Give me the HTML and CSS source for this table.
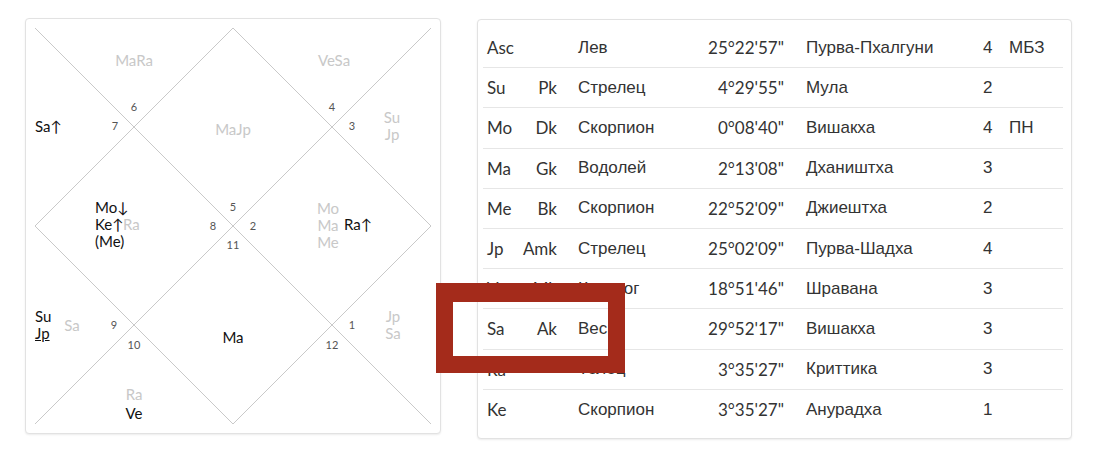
FILE: index.html
```html
<!DOCTYPE html>
<html>
<head>
<meta charset="utf-8">
<link rel="stylesheet" href="styles.css">
</head>
<body>
<div class="page">
  <div class="card chart-card">
    <div class="chart">
      <svg class="lines" width="396" height="396" viewBox="0 0 396 396">
        <g stroke="#c9c9c9" stroke-width="1" fill="none">
          <line x1="0" y1="0" x2="396" y2="396"/>
          <line x1="396" y1="0" x2="0" y2="396"/>
          <polygon points="198,0 396,198 198,396 0,198"/>
        </g>
      </svg>
      <div class="lbl g l-mara">MaRa</div>
      <div class="lbl g l-vesa">VeSa</div>
      <div class="lbl n n6">6</div>
      <div class="lbl n n7">7</div>
      <div class="lbl n n4">4</div>
      <div class="lbl n n3">3</div>
      <div class="lbl b l-sa">Sa↑</div>
      <div class="lbl g l-majp">MaJp</div>
      <div class="lbl g l-sujp">Su<br>Jp</div>
      <div class="lbl n n5">5</div>
      <div class="lbl n n8">8</div>
      <div class="lbl n n2">2</div>
      <div class="lbl n n11">11</div>
      <div class="lbl b l-moke">Mo↓<br>Ke↑<br>(Me)</div>
      <div class="lbl g l-ra1">Ra</div>
      <div class="lbl g l-momame">Mo<br>Ma<br>Me</div>
      <div class="lbl b l-ra2">Ra↑</div>
      <div class="lbl b l-sujp2">Su<br><span class="ul">Jp</span></div>
      <div class="lbl g l-sa2">Sa</div>
      <div class="lbl n n9">9</div>
      <div class="lbl n n10">10</div>
      <div class="lbl n n1">1</div>
      <div class="lbl n n12">12</div>
      <div class="lbl b l-ma">Ma</div>
      <div class="lbl g l-jpsa">Jp<br>Sa</div>
      <div class="lbl g l-ra3">Ra</div>
      <div class="lbl b l-ve">Ve</div>
    </div>
  </div>
  <div class="card table-card">
    <div class="row"><span class="c1">Asc</span><span class="c2"></span><span class="c3">Лев</span><span class="c4">25°22'57"</span><span class="c5">Пурва-Пхалгуни</span><span class="c6">4</span><span class="c7">МБЗ</span></div>
    <div class="row"><span class="c1">Su</span><span class="c2">Pk</span><span class="c3">Стрелец</span><span class="c4">4°29'55"</span><span class="c5">Мула</span><span class="c6">2</span><span class="c7"></span></div>
    <div class="row"><span class="c1">Mo</span><span class="c2">Dk</span><span class="c3">Скорпион</span><span class="c4">0°08'40"</span><span class="c5">Вишакха</span><span class="c6">4</span><span class="c7">ПН</span></div>
    <div class="row"><span class="c1">Ma</span><span class="c2">Gk</span><span class="c3">Водолей</span><span class="c4">2°13'08"</span><span class="c5">Дхаништха</span><span class="c6">3</span><span class="c7"></span></div>
    <div class="row"><span class="c1">Me</span><span class="c2">Bk</span><span class="c3">Скорпион</span><span class="c4">22°52'09"</span><span class="c5">Джиештха</span><span class="c6">2</span><span class="c7"></span></div>
    <div class="row"><span class="c1">Jp</span><span class="c2">Amk</span><span class="c3">Стрелец</span><span class="c4">25°02'09"</span><span class="c5">Пурва-Шадха</span><span class="c6">4</span><span class="c7"></span></div>
    <div class="row"><span class="c1">Ve</span><span class="c2">Mk</span><span class="c3">Козерог</span><span class="c4">18°51'46"</span><span class="c5">Шравана</span><span class="c6">3</span><span class="c7"></span></div>
    <div class="row"><span class="c1">Sa</span><span class="c2">Ak</span><span class="c3">Весы</span><span class="c4">29°52'17"</span><span class="c5">Вишакха</span><span class="c6">3</span><span class="c7"></span></div>
    <div class="row"><span class="c1">Ra</span><span class="c2"></span><span class="c3">Телец</span><span class="c4">3°35'27"</span><span class="c5">Криттика</span><span class="c6">3</span><span class="c7"></span></div>
    <div class="row"><span class="c1">Ke</span><span class="c2"></span><span class="c3">Скорпион</span><span class="c4">3°35'27"</span><span class="c5">Анурадха</span><span class="c6">1</span><span class="c7"></span></div>
  </div>
</div>
<div class="highlight"></div>
</body>
</html>
```
FILE: styles.css
```css
html, body {
  margin: 0;
  padding: 0;
  background: #ffffff;
}
body {
  width: 1099px;
  height: 453px;
  position: relative;
  overflow: hidden;
  font-family: Lato, "Liberation Sans", sans-serif;
  color: #333;
}
.page {
  display: flex;
  align-items: flex-start;
  gap: 36px;
  padding: 18px 0 0 25px;
}
.card {
  background: #fff;
  border: 1px solid #e2e2e2;
  border-radius: 4px;
  box-shadow: 0 1px 2px rgba(0,0,0,0.08);
}
.chart-card {
  padding: 9px;
}
.chart {
  position: relative;
  width: 396px;
  height: 396px;
}
.lines {
  position: absolute;
  left: 0;
  top: 0;
}
.lbl {
  position: absolute;
  white-space: nowrap;
  line-height: 17px;
  font-size: 15px;
  transform: translate(-50%, -50%);
  text-align: center;
}
.lbl.g { color: #c8c8c8; }
.lbl.b { color: #111; }
.lbl.n { color: #555; font-size: 11px; line-height: 12px; }
.ul { text-decoration: underline; }

.l-mara { left: 99px; top: 32px; }
.l-vesa { left: 299px; top: 32px; }
.n6 { left: 99px; top: 79px; }
.n7 { left: 80px; top: 98px; }
.n4 { left: 297px; top: 79px; }
.n3 { left: 317px; top: 98px; }
.l-sa { left: 0; top: 98px; transform: translate(0, -50%); text-align: left; }
.l-majp { left: 198px; top: 101px; }
.l-sujp { left: 357px; top: 98px; }
.n5 { left: 198px; top: 179px; }
.n8 { left: 178px; top: 198px; }
.n2 { left: 218px; top: 198px; }
.n11 { left: 198px; top: 217px; }
.l-moke { left: 60px; top: 196px; transform: translate(0, -50%); text-align: left; }
.l-ra1 { left: 88px; top: 196px; transform: translate(0, -50%); }
.l-momame { left: 293px; top: 197px; }
.l-ra2 { left: 309px; top: 196px; transform: translate(0, -50%); }
.l-sujp2 { left: 0; top: 297px; transform: translate(0, -50%); text-align: left; }
.l-sa2 { left: 37px; top: 297px; }
.n9 { left: 79px; top: 297px; }
.n10 { left: 99px; top: 317px; }
.n1 { left: 317px; top: 297px; }
.n12 { left: 297px; top: 317px; }
.l-ma { left: 198px; top: 309px; }
.l-jpsa { left: 358px; top: 297px; }
.l-ra3 { left: 99px; top: 366px; }
.l-ve { left: 99px; top: 385px; }

.table-card {
  margin-top: 1px;
  width: 580px;
  padding: 8px 8px 8px 5px;
}
.row {
  display: grid;
  grid-template-columns: 37px 37px 143px 84px 199px 26px 54px;
  align-items: center;
  height: 40.2px;
  box-sizing: border-box;
  border-bottom: 1px solid #e6e6e6;
  font-size: 17px;
  white-space: nowrap;
}
.row:last-child { border-bottom: none; }
.c1 { padding-left: 4px; }
.c2 { text-align: right; }
.c3 { padding-left: 21px; font-family: "Liberation Sans", Arial, sans-serif; }
.c4 { text-align: right; }
.c5 { padding-left: 22px; font-family: "Liberation Sans", Arial, sans-serif; }
.c6 { font-family: "Liberation Sans", Arial, sans-serif; }
.c7 { font-family: "Liberation Sans", Arial, sans-serif; }

.highlight {
  position: absolute;
  left: 436px;
  top: 283px;
  width: 189px;
  height: 90px;
  box-sizing: border-box;
  border: 17px solid #a42b1b;
  border-top-width: 19px;
}
```
